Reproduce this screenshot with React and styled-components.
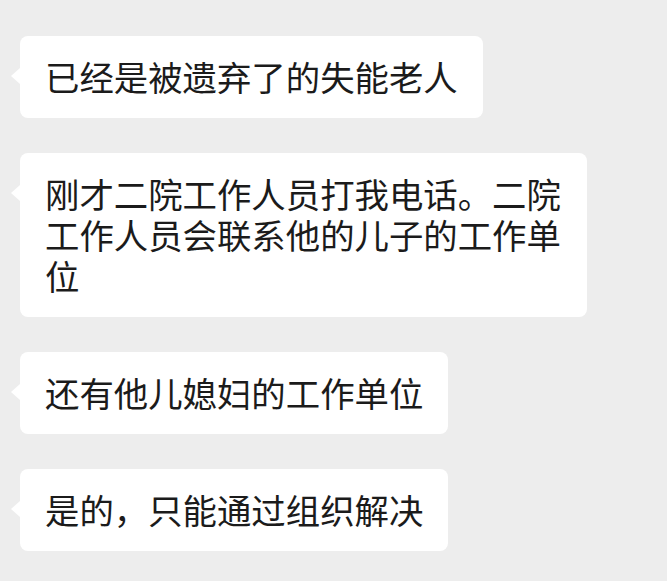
import React from 'react'
import styled, { createGlobalStyle } from 'styled-components';

const messages = [
    '已经是被遗弃了的失能老人',
    '刚才二院工作人员打我电话。二院工作人员会联系他的儿子的工作单位',
    '还有他儿媳妇的工作单位',
    '是的，只能通过组织解决',
];

function App() {
    return (
        <>
            <GlobalStyle />
            <ChatList>
                {messages.map((text, i) => (
                    <Row key={i}>
                        <Bubble>{text}</Bubble>
                    </Row>
                ))}
            </ChatList>
        </>
    )
}

const GlobalStyle = createGlobalStyle`
    html, body {
        margin: 0;
        padding: 0;
        background: #ededed;
    }
    body {
        font-family: "Noto Sans CJK SC", "Noto Sans", sans-serif;
    }
`;

const ChatList = styled.div`
    display: flex;
    flex-direction: column;
    gap: 35px;
    padding: 36px 0 0 20px;
    min-height: 581px;
    box-sizing: border-box;
    background: #ededed;
`;

const Row = styled.div`
    display: flex;
    align-items: flex-start;
`;

const Bubble = styled.div`
    position: relative;
    max-width: 567px;
    box-sizing: border-box;
    padding: 20px 25px 21px 25px;
    background: #ffffff;
    border-radius: 8px;
    color: #1b1b1b;
    font-size: 34.4px;
    line-height: 41px;
    word-break: break-all;

    /* little tail pointing at the sender */
    &::before {
        content: '';
        position: absolute;
        left: -9px;
        top: 32px;
        border-style: solid;
        border-width: 8px 9px 8px 0;
        border-color: transparent #ffffff transparent transparent;
    }
`;

export default App
